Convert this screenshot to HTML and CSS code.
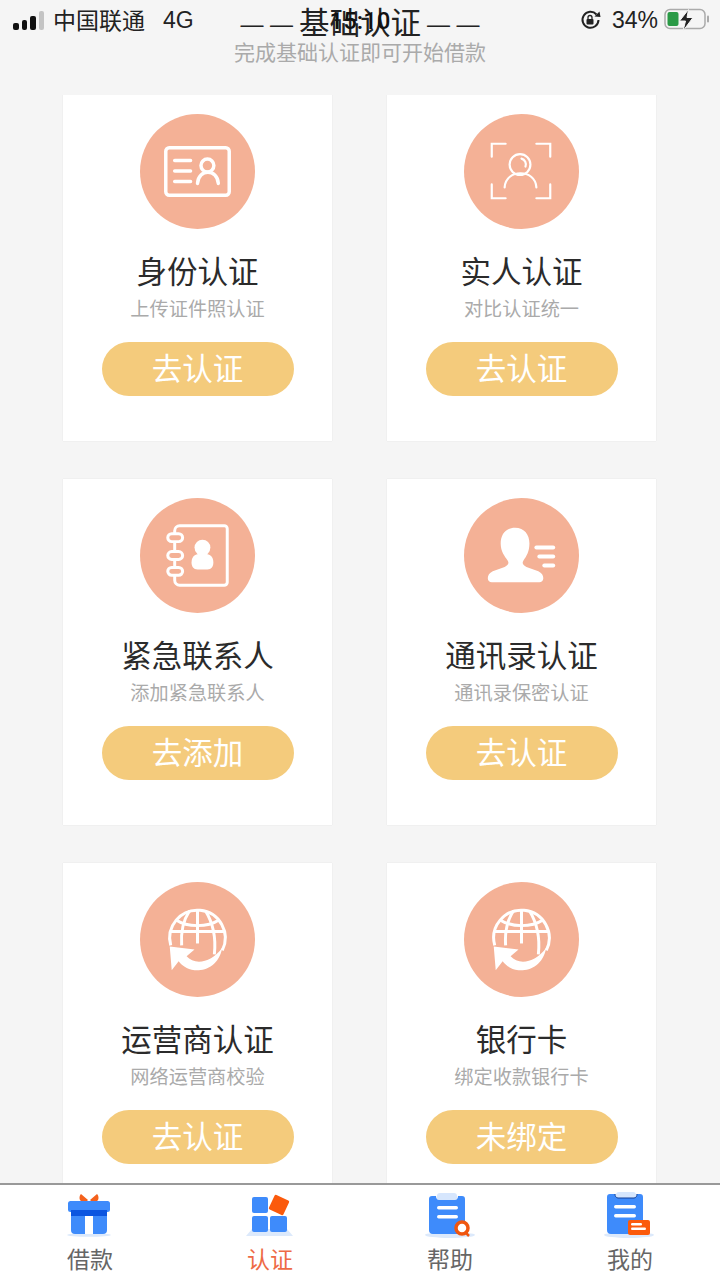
FILE: index.html
```html
<!DOCTYPE html>
<html lang="zh">
<head>
  <meta charset="UTF-8">
  <title>基础认证</title>
  <link rel="stylesheet" href="styles.css">
</head>
<body>
  <div class="status">
    <div class="status-left">
      <span class="signal"><i class="s1"></i><i class="s2"></i><i class="s3"></i><i class="s4"></i></span>
      <span class="carrier">中国联通</span>
      <span class="net">4G</span>
    </div>
    <div class="status-right">
      <svg width="21" height="20" viewBox="0 0 21 20">
        <path d="M16.500 4.500A8 8 0 1 0 18.500 10" fill="none" stroke="#222" stroke-width="2"/>
        <path d="M14.500 6.500l6 .5-1-5.500z" fill="#222"/>
        <rect x="6.500" y="9" width="7" height="5.500" rx="1" fill="#222"/>
        <path d="M8 9V7.500a2 2 0 0 1 4 0V9" fill="none" stroke="#222" stroke-width="1.300"/>
      </svg>
      <span class="percent">34%</span>
      <svg width="46" height="24" viewBox="0 0 46 24">
        <rect x="1" y="1.500" width="40" height="19" rx="5" fill="none" stroke="#aaa" stroke-width="1.500"/>
        <rect x="43" y="7.500" width="2" height="7" rx="1" fill="#aaa"/>
        <rect x="3.500" y="4" width="11" height="14" rx="2" fill="#2a9a46"/>
        <path d="M24.500 1.500L15.500 13h6L19 23l10-13.500h-6z" fill="#222" stroke="#f5f5f5" stroke-width="1"/>
      </svg>
    </div>
  </div>
  <span class="clock">15:10</span>

  <header class="head">
    <h1><span class="dash">— —</span>基础认证<span class="dash">— —</span></h1>
    <p>完成基础认证即可开始借款</p>
  </header>

  <main class="cards">
    <section class="card">
      <div class="circle">
        <svg width="115" height="115" viewBox="0 0 116 116" fill="none" stroke="#fff" stroke-width="3.500" stroke-linecap="round">
          <rect x="26" y="34" width="64" height="48" rx="3.500"/>
          <path d="M35 47h16M35 57.500h16M35 68h16"/>
          <circle cx="68" cy="52" r="6.500"/>
          <path d="M58 70c1-15 20-15 21 0"/>
        </svg>
      </div>
      <h2>身份认证</h2>
      <p>上传证件照认证</p>
      <a class="btn">去认证</a>
    </section>

    <section class="card">
      <div class="circle">
        <svg width="115" height="115" viewBox="0 0 116 116" fill="none" stroke="#fff" stroke-width="2.200" stroke-linecap="round">
          <path d="M28 43V30h14M73 30h14v13M28 71v14h14M73 85h14V71"/>
          <circle cx="56.500" cy="51" r="10.500"/>
          <path d="M58 45a6 6 0 0 1 4 8"/>
          <path d="M41 74c1-19 31-19 32 0"/>
        </svg>
      </div>
      <h2>实人认证</h2>
      <p>对比认证统一</p>
      <a class="btn">去认证</a>
    </section>

    <section class="card">
      <div class="circle">
        <svg width="115" height="115" viewBox="0 0 116 116" fill="none" stroke="#fff" stroke-width="3" stroke-linecap="round">
          <path d="M35 35v-2a5 5 0 0 1 5-5h45a3 3 0 0 1 3 3v54a3 3 0 0 1-3 3H40a5 5 0 0 1-5-5v-4"/>
          <path d="M35 45v9M35 63v6"/>
          <rect x="28" y="36" width="15" height="8" rx="4"/>
          <rect x="28" y="54" width="15" height="8" rx="4"/>
          <rect x="28" y="70" width="15" height="8" rx="4"/>
          <circle cx="63" cy="50" r="8" fill="#fff" stroke="none"/>
          <path d="M52 65c0-7 5-9 11-9s11 2 11 9c0 4-2 7-6 7H58c-4 0-6-3-6-7z" fill="#fff" stroke="none"/>
        </svg>
      </div>
      <h2>紧急联系人</h2>
      <p>添加紧急联系人</p>
      <a class="btn">去添加</a>
    </section>

    <section class="card">
      <div class="circle">
        <svg width="115" height="115" viewBox="0 0 116 116" fill="#fff">
          <path d="M51.500 30C42 30 37 37 37 46C37 54 41 59 44 63C46 66 44 68 41 69.500L29 74C25.500 76 24 78 24 81C24 84 26 85 28 85H76C78 85 80 84 80 81C80 78 78.500 76 75 74L63 69.500C60 68 58 66 60 63C63 59 66 54 66 46C66 37 61 30 51.500 30Z"/>
          <rect x="71" y="48" width="21" height="4" rx="2"/>
          <rect x="74" y="57" width="18" height="4" rx="2"/>
          <rect x="79" y="66" width="13" height="4" rx="2"/>
        </svg>
      </div>
      <h2>通讯录认证</h2>
      <p>通讯录保密认证</p>
      <a class="btn">去认证</a>
    </section>

    <section class="card">
      <div class="circle">
        <svg width="115" height="115" viewBox="0 0 116 116">
          <use href="#globe"/>
        </svg>
      </div>
      <h2>运营商认证</h2>
      <p>网络运营商校验</p>
      <a class="btn">去认证</a>
    </section>

    <section class="card">
      <div class="circle">
        <svg width="115" height="115" viewBox="0 0 116 116">
          <use href="#globe"/>
        </svg>
      </div>
      <h2>银行卡</h2>
      <p>绑定收款银行卡</p>
      <a class="btn">未绑定</a>
    </section>
  </main>

  <nav class="tabs">
    <a class="tab">
      <svg width="48" height="48" viewBox="0 0 48 48">
        <ellipse cx="23" cy="45" rx="22" ry="1.800" fill="#dce9fb"/>
        <path d="M15 4l7 6-1 1h-6c-2-1-2-5 0-7zM31 4l-7 6 1 1h6c2-1 2-5 0-7z" fill="#f4611c"/>
        <path d="M5 20h36v20a4 4 0 0 1-4 4H9a4 4 0 0 1-4-4z" fill="#3e8bfb"/>
        <rect x="19" y="26" width="8" height="18" fill="#fff"/>
        <rect x="2" y="11" width="42" height="11" rx="2.500" fill="#3e8bfb"/>
        <rect x="5" y="20" width="36" height="6" fill="#0b55e0"/>
      </svg>
      <span>借款</span>
    </a>
    <a class="tab active">
      <svg width="48" height="48" viewBox="0 0 48 48">
        <path d="M0 46l6-7h35l6 7z" fill="#dce9fb"/>
        <rect x="6" y="7" width="16" height="16" rx="2" fill="#3e8bfb"/>
        <rect x="6" y="26" width="16" height="16" rx="2" fill="#3e8bfb"/>
        <rect x="24" y="26" width="17" height="16" rx="2" fill="#3e8bfb"/>
        <rect x="25" y="7" width="16" height="16" rx="1.500" fill="#fb5a0c" transform="rotate(25 33 15)"/>
      </svg>
      <span>认证</span>
    </a>
    <a class="tab">
      <svg width="52" height="48" viewBox="0 0 52 48">
        <ellipse cx="26" cy="45" rx="25" ry="3" fill="#dce9fb"/>
        <rect x="13" y="3" width="20" height="8" rx="3" fill="#d6e6fd"/>
        <path d="M5 9a3 3 0 0 1 3-3h4c0 2 1 4 3 4h16c2 0 3-2 3-4h4a3 3 0 0 1 3 3v32a3 3 0 0 1-3 3H9a4 4 0 0 1-4-4z" fill="#3e8bfb"/>
        <rect x="13" y="16" width="21" height="3.500" rx="1.700" fill="#fff"/>
        <rect x="13" y="25" width="21" height="3.500" rx="1.700" fill="#fff"/>
        <circle cx="38" cy="38" r="6" fill="#fff" stroke="#f0560f" stroke-width="3.500"/>
        <path d="M42 43l3 3" stroke="#f0560f" stroke-width="2.500"/>
      </svg>
      <span>帮助</span>
    </a>
    <a class="tab">
      <svg width="52" height="48" viewBox="0 0 52 48">
        <ellipse cx="25" cy="45" rx="25" ry="3" fill="#dce9fb"/>
        <rect x="12" y="2" width="20" height="8" rx="3" fill="#d6e6fd"/>
        <path d="M3 7a3 3 0 0 1 3-3h5c0 2 1 4 3 4h16c2 0 3-2 3-4h3a3 3 0 0 1 3 3v34a3 3 0 0 1-3 3H7a4 4 0 0 1-4-4z" fill="#3e8bfb"/>
        <path d="M11 4c0 2 1 4 3 4h16c2 0 3-2 3-4" fill="none" stroke="#123f96" stroke-width="1"/>
        <rect x="10" y="15" width="22" height="3.500" rx="1.700" fill="#fff"/>
        <rect x="10" y="24" width="22" height="3.500" rx="1.700" fill="#fff"/>
        <rect x="24" y="30" width="22" height="15" rx="2" fill="#fb5a0c"/>
        <rect x="27" y="33" width="11" height="2.500" rx="1.200" fill="#fff"/>
        <rect x="27" y="37.500" width="15" height="2.500" rx="1.200" fill="#fff"/>
      </svg>
      <span>我的</span>
    </a>
  </nav>

  <svg class="defs" width="0" height="0">
    <defs>
      <g id="globe">
        <g fill="none" stroke="#fff" stroke-width="3">
          <path d="M31 64A28 28 0 1 1 83 69"/>
          <path d="M50 29C44 38 41 50 42 64"/>
          <path d="M66 29C74 42 77 55 75 73"/>
          <path d="M58 28V62"/>
          <path d="M36 38C48 46 68 46 80 38"/>
          <path d="M30 50H85"/>
        </g>
        <path d="M30 65L55 68L47 75C55 84 72 82 83 66C80 84 66 90 55 89C47 88 42 84 39 80L32 89Z" fill="#fff"/>
      </g>
    </defs>
  </svg>
</body>
</html>
```

FILE: styles.css
```css
* {
  box-sizing: border-box;
}

html,
body {
  margin: 0;
  height: 1280px;
  overflow: hidden;
}

body {
  position: relative;
  background-color: #f5f5f5;
  font-family: "Noto Sans CJK SC", "Liberation Sans", sans-serif;
  color: #2b2b2b;
  display: flex;
  flex-direction: column;
}

h1,
h2,
p {
  margin: 0;
  font-weight: normal;
}

/* status bar lies over the heading */
.status {
  position: absolute;
  top: 0;
  left: 0;
  width: 720px;
  height: 40px;
  padding: 0 10px 0 13px;
  display: flex;
  justify-content: space-between;
  align-items: center;
  font-size: 23px;
  color: #222;
}

.status-left,
.status-right {
  display: flex;
  align-items: center;
}

.signal {
  display: flex;
  align-items: flex-end;
  gap: 3px;
  height: 19px;
  margin-right: 9px;
}

.signal i {
  display: block;
  width: 5.500px;
  border-radius: 2px;
  background-color: #111;
}

.s1 { height: 7px; }
.s2 { height: 10px; }
.s3 { height: 14px; }
.signal .s4 { height: 19px; background-color: #c4c4c4; }

.carrier {
  line-height: 30px;
  margin-top: -2px;
}

.net {
  margin-left: 18px;
  font-family: "Liberation Sans", sans-serif;
  font-size: 23px;
}

.percent {
  margin: 0 6px 0 11px;
  font-family: "Liberation Sans", sans-serif;
  font-size: 23px;
}

.clock {
  position: absolute;
  top: 6px;
  left: 0;
  width: 720px;
  text-align: center;
  font-family: Roboto, "Liberation Sans", sans-serif;
  font-size: 24px;
  font-weight: 500;
  line-height: 30px;
  color: #111;
}

/* heading */
.head {
  height: 95px;
  text-align: center;
  flex-shrink: 0;
}

.head h1 {
  height: 41px;
  font-size: 30.500px;
  line-height: 42px;
  color: #222;
}

.dash {
  margin: 0 6px;
  font-family: "Liberation Sans", sans-serif;
  font-size: 23px;
  vertical-align: 2px;
}

.head p {
  font-size: 21px;
  line-height: 20px;
  color: #aaa;
}

/* cards */
.cards {
  flex: 1;
  min-height: 0;
  overflow: hidden;
  padding-left: 63px;
  display: grid;
  grid-template-columns: 269px 269px;
  grid-auto-rows: 345.500px;
  column-gap: 55px;
  row-gap: 38.500px;
}

.card {
  background-color: #fff;
  box-shadow: 0 0 1px rgba(0, 0, 0, 0.12);
  padding-top: 19px;
  display: flex;
  flex-direction: column;
  align-items: center;
}

.circle {
  width: 115px;
  height: 115px;
  border-radius: 50%;
  background-color: #f4b196;
  flex-shrink: 0;
}

.circle svg {
  display: block;
}

.card h2 {
  margin-top: 18px;
  font-size: 30.500px;
  line-height: 46px;
  color: #2b2b2b;
}

.card p {
  font-size: 19.200px;
  line-height: 30px;
  color: #aaa;
}

.btn {
  margin-top: 19px;
  width: 192px;
  height: 54px;
  border-radius: 27px;
  background-color: #f4cb7c;
  color: #fff;
  font-size: 30.500px;
  line-height: 51px;
  text-align: center;
}

/* bottom tabs */
.tabs {
  height: 97px;
  flex-shrink: 0;
  background-color: #fff;
  border-top: 2px solid #999;
  display: grid;
  grid-template-columns: repeat(4, 1fr);
}

.tab {
  display: flex;
  flex-direction: column;
  align-items: center;
  padding-top: 5px;
  font-size: 23px;
  line-height: 32px;
  color: #666;
}

.tab svg {
  display: block;
  flex-shrink: 0;
  margin-bottom: 4px;
}

.tab.active {
  color: #ee6a45;
}

.defs {
  position: absolute;
}
```
